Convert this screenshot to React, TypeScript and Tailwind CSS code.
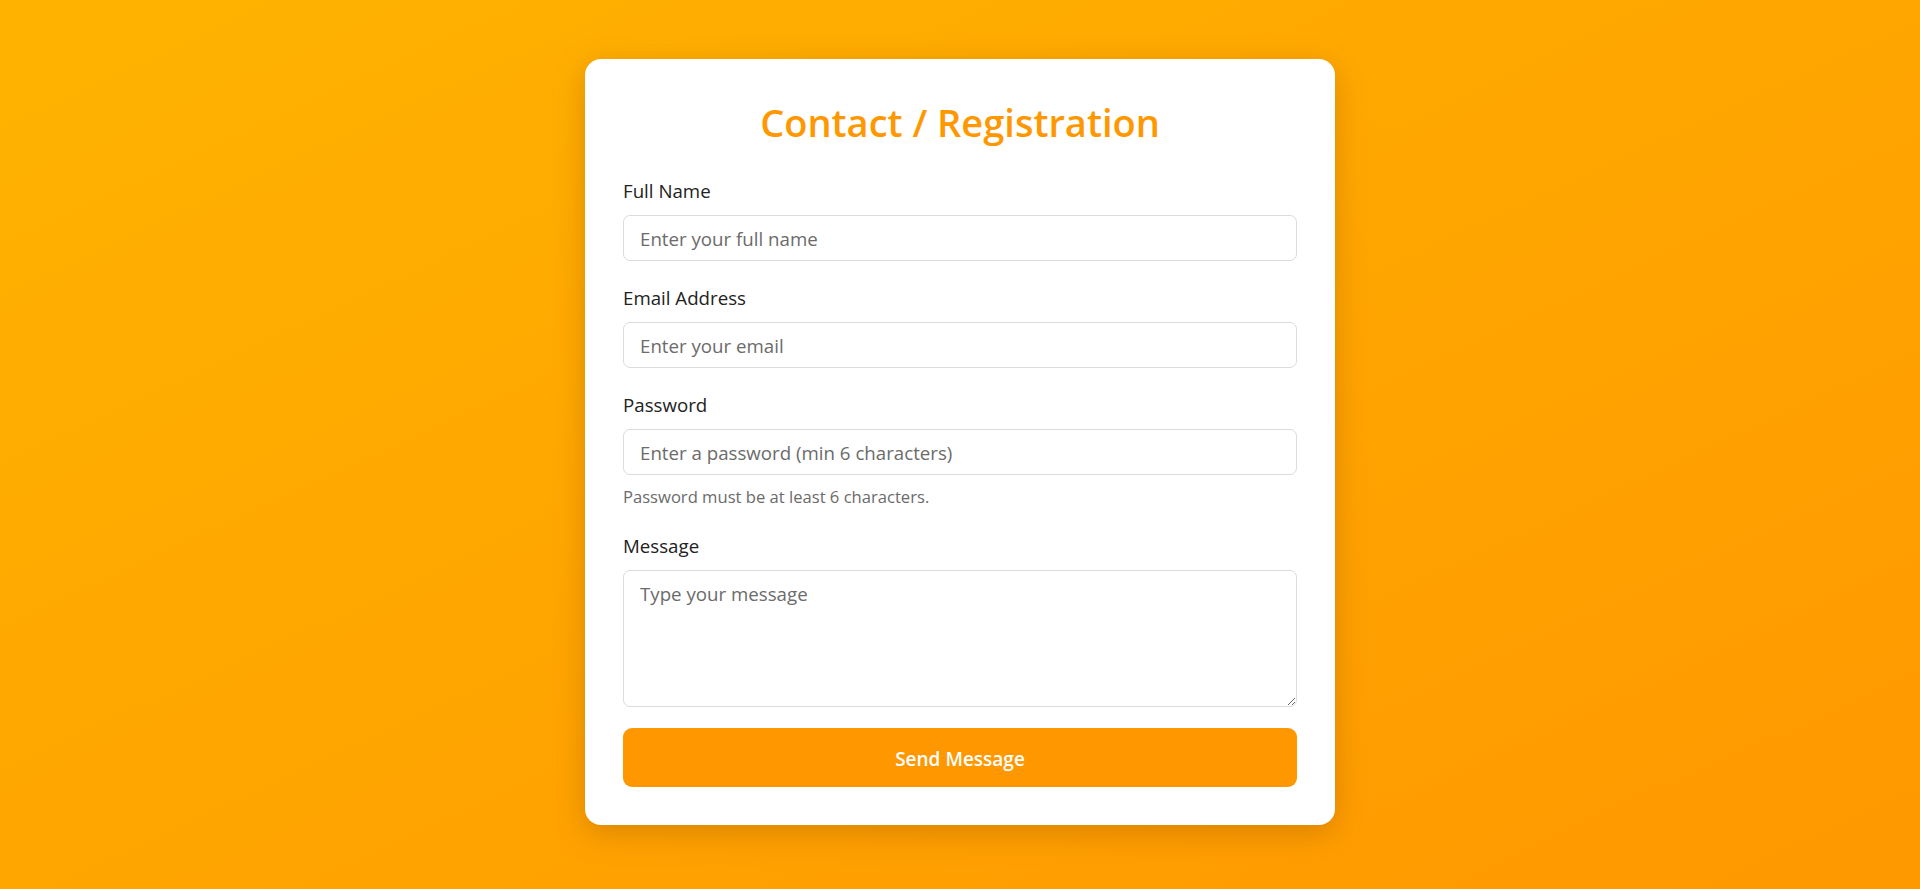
const font = { fontFamily: '"Open Sans", "Noto Sans", Arial, sans-serif' };

function Field({
  label,
  placeholder,
  type = 'text',
  hint,
}: {
  label: string;
  placeholder: string;
  type?: string;
  hint?: string;
}) {
  return (
    <div className="mb-[23px]">
      <label className="block text-[18.7px] leading-[28px] text-[#222] mb-[10px]">{label}</label>
      <input
        type={type}
        placeholder={placeholder}
        className="block w-full h-[46px] px-4 rounded-[7px] border border-[#dcdcdc] bg-white text-[18.7px] text-[#222] placeholder:text-[#6b6b6b] focus:outline-none"
      />
      {hint && <p className="mt-[10px] mb-[2px] text-[16.6px] leading-[24px] text-[#6b6b6b]">{hint}</p>}
    </div>
  );
}

export default function App() {
  return (
    <section
      className="min-h-screen w-full flex justify-center pt-[59px] pb-10 bg-gradient-to-br from-[#ffb300] to-[#ff9800]"
      style={font}
    >
      <div className="w-[750px] h-fit bg-white rounded-2xl px-[38px] pt-[39px] pb-[38px] shadow-[0_8px_30px_rgba(150,80,0,0.35)]">
        <h1 className="text-center text-[38px] leading-[48px] font-semibold text-[#ff9800] mb-[31px]">
          Contact / Registration
        </h1>
        <form onSubmit={(e) => e.preventDefault()}>
          <Field label="Full Name" placeholder="Enter your full name" />
          <Field label="Email Address" placeholder="Enter your email" type="email" />
          <Field
            label="Password"
            placeholder="Enter a password (min 6 characters)"
            type="password"
            hint="Password must be at least 6 characters."
          />
          <div className="mb-[21px]">
            <label className="block text-[18.7px] leading-[28px] text-[#222] mb-[10px]">Message</label>
            <textarea
              placeholder="Type your message"
              className="block w-full h-[137px] px-4 py-[10px] rounded-[7px] border border-[#dcdcdc] bg-white text-[18.7px] leading-[26px] text-[#222] placeholder:text-[#6b6b6b] focus:outline-none"
            ></textarea>
          </div>
          <button
            type="submit"
            className="block w-full h-[59px] pt-[3px] rounded-[9px] bg-[#ff9800] text-white text-[19px] font-semibold"
          >
            Send Message
          </button>
        </form>
      </div>
    </section>
  );
}
